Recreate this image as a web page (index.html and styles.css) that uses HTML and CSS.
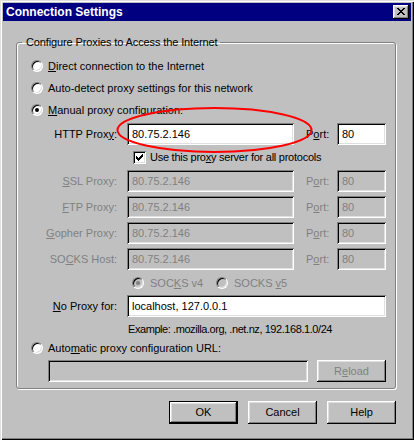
FILE: index.html
```html
<!DOCTYPE html>
<html>
<head>
<meta charset="utf-8">
<title>Connection Settings</title>
<link rel="stylesheet" href="styles.css">
</head>
<body>
<div class="window">
  <div class="titlebar">
    <span class="title">Connection Settings</span>
    <span class="close">
      <svg width="8" height="7" viewBox="0 0 8 7" shape-rendering="crispEdges"><path d="M0 0h2v1h-2zM6 0h2v1h-2zM1 1h2v1h-2zM5 1h2v1h-2zM2 2h4v1h-4zM3 3h2v1h-2zM2 4h4v1h-4zM1 5h2v1h-2zM5 5h2v1h-2zM0 6h2v1h-2zM6 6h2v1h-2z" fill="#000"/></svg>
    </span>
  </div>
  <div class="content">
    <fieldset class="group">
      <legend>Configure Proxies to Access the Internet</legend>
      <div class="opt"><span class="radio"></span><span><u>D</u>irect connection to the Internet</span></div>
      <div class="opt"><span class="radio"></span><span>Auto-detect proxy settings for this network</span></div>
      <div class="opt"><span class="radio checked"></span><span><u>M</u>anual proxy configuration:</span></div>

      <div class="prow first">
        <span class="lbl">HTTP Prox<u>y</u>:</span>
        <span class="field">80.75.2.146</span>
        <span class="plbl">P<u>o</u>rt:</span>
        <span class="field">80</span>
      </div>
      <div class="chkrow"><span class="check"><svg width="7" height="7" viewBox="0 0 7 7" shape-rendering="crispEdges"><path d="M6 0h1v1h-1zM5 1h2v1h-2zM0 2h1v1h-1zM4 2h3v1h-3zM0 3h2v1h-2zM3 3h3v1h-3zM0 4h5v1h-5zM1 5h3v1h-3zM2 6h1v1h-1z" fill="#000"/></svg></span><span class="usetext">Use this pro<u>x</u>y server for all protocols</span></div>
      <div class="prow dis">
        <span class="lbl"><u>S</u>SL Proxy:</span>
        <span class="field off">80.75.2.146</span>
        <span class="plbl">P<u>o</u>rt:</span>
        <span class="field off">80</span>
      </div>
      <div class="prow dis next">
        <span class="lbl"><u>F</u>TP Proxy:</span>
        <span class="field off">80.75.2.146</span>
        <span class="plbl">P<u>o</u>rt:</span>
        <span class="field off">80</span>
      </div>
      <div class="prow dis next">
        <span class="lbl"><u>G</u>opher Proxy:</span>
        <span class="field off">80.75.2.146</span>
        <span class="plbl">P<u>o</u>rt:</span>
        <span class="field off">80</span>
      </div>
      <div class="prow dis next">
        <span class="lbl">SO<u>C</u>KS Host:</span>
        <span class="field off">80.75.2.146</span>
        <span class="plbl">P<u>o</u>rt:</span>
        <span class="field off">80</span>
      </div>
      <div class="socks">
        <span class="sopt v4"><span class="radio off checked"></span><span>SOC<u>K</u>S v4</span></span>
        <span class="sopt"><span class="radio off"></span><span>SOCKS <u>v</u>5</span></span>
      </div>
      <div class="nrow">
        <span class="lbl"><u>N</u>o Proxy for:</span>
        <span class="field">localhost, 127.0.0.1</span>
      </div>
      <div class="example">Example: .mozilla.org, .net.nz, 192.168.1.0/24</div>
      <div class="opt auto"><span class="radio"></span><span>Auto<u>m</u>atic proxy configuration URL:</span></div>
      <div class="urlrow">
        <span class="field url"></span>
        <span class="btn reload">R<u>e</u>load</span>
      </div>
    </fieldset>
    <div class="buttons">
      <span class="btn default">OK</span>
      <span class="btn">Cancel</span>
      <span class="btn">Help</span>
    </div>
  </div>
  <svg class="mark" width="414" height="440" viewBox="0 0 414 440"><ellipse cx="214.5" cy="130" rx="97" ry="22" fill="none" stroke="#ff0000" stroke-width="2"/></svg>
</div>
</body>
</html>
```
FILE: styles.css
```css
* { box-sizing: border-box; }
html, body { margin: 0; padding: 0; }
body {
  font-family: "Liberation Sans", Arial, sans-serif;
  font-size: 11px;
  line-height: 13px;
  color: #000;
  background: #c0c0c0;
}
u { text-decoration: underline; text-underline-offset: 1px; }

.window {
  position: relative;
  width: 414px;
  height: 440px;
  padding: 3px;
  background: #c0c0c0;
  box-shadow: inset 1px 1px 0 #dfdfdf, inset 2px 2px 0 #fff, inset -1px -1px 0 #000, inset -2px -2px 0 #808080;
  display: flex;
  flex-direction: column;
}

.titlebar {
  height: 18px;
  background: #000080;
  color: #fff;
  font-weight: bold;
  font-size: 12px;
  display: flex;
  align-items: center;
  justify-content: space-between;
  padding: 0 2px 0 3px;
}
.close {
  width: 16px;
  height: 14px;
  background: #c0c0c0;
  box-shadow: inset -1px -1px #000, inset 1px 1px #fff, inset -2px -2px #808080, inset 2px 2px #dfdfdf;
  display: flex;
  align-items: center;
  justify-content: center;
  padding-bottom: 1px;
}
.close svg { display: block; }

.content { padding: 0 15px 0 13px; }

.group {
  margin: 15px 0 0 0;
  padding: 6px 8px 6px 14px;
  border: 1px solid #808080;
  border-radius: 3px;
  box-shadow: inset 1px 1px #fff, 1px 1px #fff;
  min-width: 0;
}
.group legend {
  padding: 0 3px 0 4px;
  margin-left: -9px;
  line-height: 13px;
  letter-spacing: -0.12px;
}

.opt {
  display: flex;
  align-items: center;
  gap: 5px;
  height: 22px;
  white-space: nowrap;
}
.opt.auto { height: 20px; }

.radio {
  position: relative;
  flex: none;
  width: 12px;
  height: 12px;
  border-radius: 50%;
  border: 1px solid;
  border-color: #808080 #fff #fff #808080;
  background: #fff;
  box-shadow: inset 1px 1px #000, inset -1px -1px #dfdfdf;
}
.radio.checked::after {
  content: "";
  position: absolute;
  left: 3px;
  top: 3px;
  width: 4px;
  height: 4px;
  border-radius: 50%;
  background: #000;
}
.radio.off { background: #c0c0c0; }
.radio.off.checked::after { background: #808080; }

.prow {
  display: grid;
  grid-template-columns: 96px 167px 43px 49px;
  align-items: center;
  height: 22px;
  white-space: nowrap;
}
.prow.first { margin-top: 2px; }
.prow.next { margin-top: 4px; }
.lbl { text-align: right; padding-right: 10px; }
.plbl { padding-left: 12px; }
.dis .lbl, .dis .plbl { color: #808080; }

.field {
  height: 22px;
  display: flex;
  align-items: center;
  padding: 0 5px;
  background: #fff;
  box-shadow: inset 1px 1px #808080, inset -1px -1px #fff, inset 2px 2px #000, inset -2px -2px #dfdfdf;
  white-space: nowrap;
  overflow: hidden;
}
.field.off { background: #c0c0c0; color: #808080; }

.chkrow {
  display: flex;
  align-items: center;
  gap: 4px;
  height: 25px;
  padding-left: 102px;
  white-space: nowrap;
}
.usetext { letter-spacing: -0.25px; }
.check {
  flex: none;
  width: 13px;
  height: 13px;
  background: #fff;
  box-shadow: inset 1px 1px #808080, inset -1px -1px #fff, inset 2px 2px #000, inset -2px -2px #dfdfdf;
  display: flex;
  align-items: center;
  justify-content: center;
}
.check svg { display: block; }

.socks {
  display: flex;
  align-items: center;
  height: 22px;
  margin-top: 2px;
  padding-left: 101px;
  color: #808080;
  white-space: nowrap;
}
.sopt { display: flex; align-items: center; gap: 6px; }
.sopt.v4 { width: 84px; }

.nrow {
  display: grid;
  grid-template-columns: 96px 259px;
  align-items: center;
  height: 22px;
  margin-top: 1px;
  white-space: nowrap;
}

.example {
  height: 18px;
  margin-top: 3px;
  padding-left: 97px;
  display: flex;
  align-items: center;
  white-space: nowrap;
  letter-spacing: -0.43px;
}

.urlrow {
  display: flex;
  align-items: center;
  gap: 9px;
  margin-top: 2px;
  padding-left: 17px;
}
.field.url { width: 260px; background: #c0c0c0; }

.btn {
  width: 69px;
  height: 23px;
  display: flex;
  align-items: center;
  justify-content: center;
  background: #c0c0c0;
  box-shadow: inset -1px -1px #000, inset 1px 1px #fff, inset -2px -2px #808080, inset 2px 2px #dfdfdf;
}
.btn.default { border: 1px solid #000; }
.btn.reload { height: 22px; color: #808080; }

.buttons {
  display: flex;
  justify-content: flex-end;
  gap: 10px;
  margin-top: 12px;
}

.mark {
  position: absolute;
  left: 0;
  top: 0;
  pointer-events: none;
}
```
